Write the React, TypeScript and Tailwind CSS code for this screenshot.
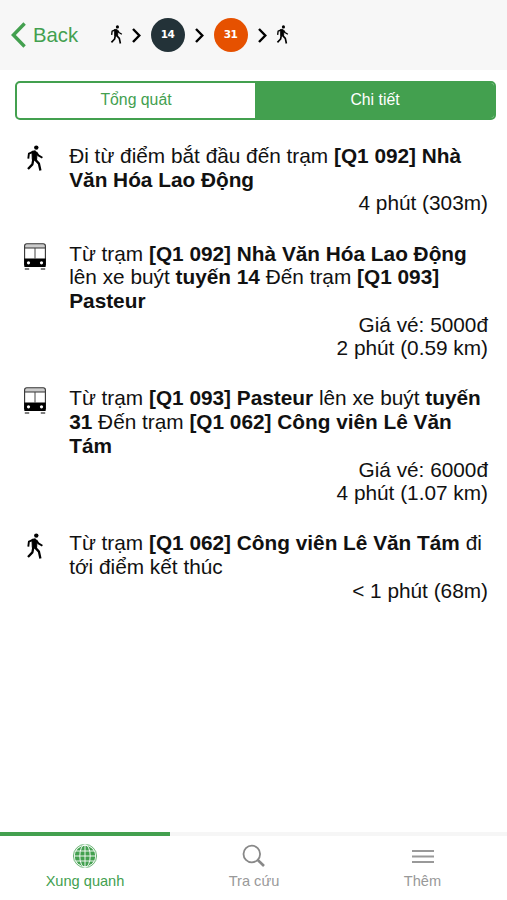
import type { ReactNode } from 'react';

type Mode = 'walk' | 'bus';

interface Step {
  mode: Mode;
  text: ReactNode;
  info: string[];
}

const steps: Step[] = [
  {
    mode: 'walk',
    text: <>Đi từ điểm bắt đầu đến trạm <b>[Q1 092] Nhà<br />Văn Hóa Lao Động</b></>,
    info: ['4 phút (303m)'],
  },
  {
    mode: 'bus',
    text: <>Từ trạm <b>[Q1 092] Nhà Văn Hóa Lao Động</b><br />lên xe buýt <b>tuyến 14</b> Đến trạm <b>[Q1 093]<br />Pasteur</b></>,
    info: ['Giá vé: 5000đ', '2 phút (0.59 km)'],
  },
  {
    mode: 'bus',
    text: <>Từ trạm <b>[Q1 093] Pasteur</b> lên xe buýt <b>tuyến<br />31</b> Đến trạm <b>[Q1 062] Công viên Lê Văn<br />Tám</b></>,
    info: ['Giá vé: 6000đ', '4 phút (1.07 km)'],
  },
  {
    mode: 'walk',
    text: <>Từ trạm <b>[Q1 062] Công viên Lê Văn Tám</b> đi<br />tới điểm kết thúc</>,
    info: ['< 1 phút (68m)'],
  },
];

function WalkIcon({ className }: { className: string }) {
  return (
    <svg viewBox="0 0 18 27" fill="none" stroke="#000" strokeLinejoin="round" className={className}>
      <circle cx="10.3" cy="2.6" r="2.2" fill="#000" stroke="none" />
      <path d="M6 6.4 9.3 5.8 11 8 10.6 14.8 6.3 14.6Z" fill="#000" strokeWidth="1" />
      <path d="M7.5 6.6 2.9 8.6 2.3 13.6M10.3 7.4 12.4 10.4 16.4 12.8" strokeWidth="1.9" />
      <path d="M7.4 14 6.4 19.4 2 24M9 14.4 12.9 18.6 14.4 25.6" strokeWidth="2.3" />
    </svg>
  );
}

function BusIcon() {
  return (
    <svg viewBox="0 0 22 27" fill="none" className="mt-px h-[27px] w-[22px]">
      <path d="M2.5 1h17a2 2 0 0 1 2 2v2h-21V3a2 2 0 0 1 2-2Z" fill="#ccc" />
      <path d="M.6 22V3A2.2 2.2 0 0 1 2.8.8h16.4A2.2 2.2 0 0 1 21.4 3v19M1 5h20" stroke="#333" strokeWidth="1.1" />
      <path d="M11 5v10.5" stroke="#444" />
      <path d="M.2 15.6h21.6v7.3a1.2 1.2 0 0 1-1.2 1.2H1.4a1.2 1.2 0 0 1-1.2-1.2Z" fill="#000" />
      <circle cx="4.5" cy="19.8" r="1.6" fill="#fff" />
      <circle cx="17.5" cy="19.8" r="1.6" fill="#fff" />
      <path d="M.8 26h4.4M16.8 26h4.4" stroke="#555" strokeWidth="1.3" />
    </svg>
  );
}

function Chevron() {
  return (
    <svg viewBox="0 0 9 15" fill="none" stroke="#000" strokeWidth="2.4" className="h-[15px] w-[9px]">
      <path d="M1 1l6.3 6.5L1 14" />
    </svg>
  );
}

function RouteBadge({ color, children }: { color: string; children: string }) {
  return (
    <span className={`flex size-[34px] items-center justify-center rounded-full font-['DejaVu_Sans',sans-serif] text-[10.5px] font-bold tracking-[-0.5px] text-white ${color}`}>
      {children}
    </span>
  );
}

function GlobeIcon() {
  return (
    <svg viewBox="0 0 26 26" fill="none" className="h-[26px] w-[26px]">
      <circle cx="13" cy="13" r="11.6" stroke="#43a04f" strokeWidth=".8" />
      <circle cx="13" cy="13" r="10.3" fill="#43a04f" />
      <g stroke="#fff" strokeWidth=".9">
        <path d="M13 2v22M2 13h22M4 8h18M4 18h18" />
        <ellipse cx="13" cy="13" rx="5.2" ry="11.5" />
      </g>
    </svg>
  );
}

export default function App() {
  return (
    <div className="flex h-[900px] w-[507px] flex-col overflow-hidden bg-white font-['Liberation_Sans',Arial,sans-serif] text-[#111]">
      {/* Header */}
      <header className="flex h-[70px] shrink-0 items-center bg-[#f7f7f7] pl-[11px]">
        <button className="flex items-center text-[#43a04f]">
          <svg viewBox="0 0 15 26" fill="none" stroke="currentColor" strokeWidth="3.4" className="h-[26px] w-[15px]">
            <path d="M13.6 1.5 2.4 13l11.2 11.5" />
          </svg>
          <span className="ml-[7px] text-[20.3px] leading-6">Back</span>
        </button>
        <div className="ml-[31.5px] flex items-center">
          <WalkIcon className="h-[19.5px] w-[13px]" />
          <span className="mr-[10px] ml-[9px]"><Chevron /></span>
          <RouteBadge color="bg-[#233238]">14</RouteBadge>
          <span className="mx-[10px]"><Chevron /></span>
          <RouteBadge color="bg-[#e65100]">31</RouteBadge>
          <span className="ml-[10px]"><Chevron /></span>
          <WalkIcon className="ml-[9px] h-[19.5px] w-[13px]" />
        </div>
      </header>

      {/* Segmented control */}
      <div className="mt-[11px] mr-[11px] ml-[15px] flex h-[39px] shrink-0 overflow-hidden rounded-[5px] border-2 border-[#43a04f] text-[15.8px]">
        <button className="w-[238px] pb-px text-[#43a04f]">Tổng quát</button>
        <button className="flex-1 bg-[#43a04f] pb-px pl-px text-white">Chi tiết</button>
      </div>

      {/* Steps */}
      <main className="flex flex-1 flex-col gap-[26.4px] pt-6 pr-[19px] pl-6 text-[20.8px] leading-[23.7px]">
        {steps.map((step, i) => (
          <div key={i} className="flex">
            <div className="w-[45.2px] shrink-0">
              {step.mode === 'walk' ? <WalkIcon className="mt-[1.4px] ml-[2px] h-[27px] w-[18px]" /> : <BusIcon />}
            </div>
            <div className="flex-1 whitespace-nowrap">
              <p>{step.text}</p>
              {step.info.map((line) => (
                <p key={line} className="text-right">{line}</p>
              ))}
            </div>
          </div>
        ))}
      </main>

      {/* Bottom tabs */}
      <nav className="grid h-[68px] shrink-0 grid-cols-[170px_168px_169px] text-center text-[14.6px] leading-[18px] text-[#999]">
        <div className="flex flex-col items-center border-t-4 border-[#43a04f] pt-[7px] text-[#43a04f]">
          <GlobeIcon />
          <span className="mt-[3px]">Xung quanh</span>
        </div>
        <div className="flex flex-col items-center border-t-4 border-[#f6f6f6] pt-[7px]">
          <svg viewBox="0 0 26 26" fill="none" stroke="#888" strokeWidth="1.8" className="h-[26px] w-[26px]">
            <circle cx="10.8" cy="11" r="8.3" />
            <path d="m16.8 17 6.2 6" strokeWidth="2.6" />
          </svg>
          <span className="mt-[3px]">Tra cứu</span>
        </div>
        <div className="flex flex-col items-center border-t-4 border-[#f6f6f6] pt-[7px]">
          <svg viewBox="0 0 26 26" stroke="#999" strokeWidth="2" className="h-[26px] w-[26px]">
            <path d="M2 8h22M2 13.5h22M2 19h22" />
          </svg>
          <span className="mt-[3px]">Thêm</span>
        </div>
      </nav>
    </div>
  );
}
